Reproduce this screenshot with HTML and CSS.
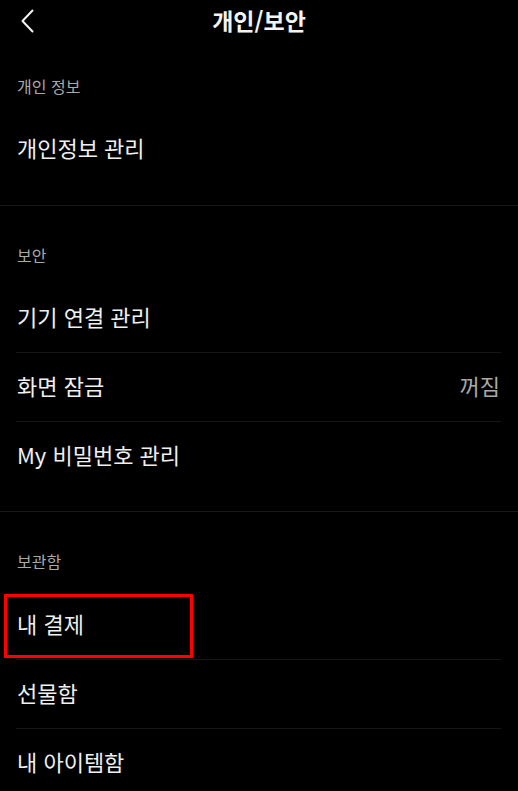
FILE: index.html
```html
<!DOCTYPE html>
<html lang="ko">
<head>
<meta charset="utf-8">
<title>개인/보안</title>
<link rel="stylesheet" href="styles.css">
</head>
<body>
<header class="topbar">
  <div class="back">
    <svg width="16" height="24" viewBox="0 0 16 24"><path d="M12.5 1.5 L2.5 12 L12.5 22.5" fill="none" stroke="#f2f2f2" stroke-width="2" stroke-linecap="round" stroke-linejoin="round"/></svg>
  </div>
  <h1 class="title">개인/보안</h1>
  <div></div>
</header>

<section class="section first">
  <div class="label">개인 정보</div>
  <ul class="list">
    <li class="item">개인정보 관리</li>
  </ul>
</section>

<section class="section">
  <div class="label">보안</div>
  <ul class="list">
    <li class="item">기기 연결 관리</li>
    <li class="item"><span>화면 잠금</span><span class="value">꺼짐</span></li>
    <li class="item">My 비밀번호 관리</li>
  </ul>
</section>

<section class="section last">
  <div class="label">보관함</div>
  <ul class="list">
    <li class="item highlighted">내 결제<span class="mark"></span></li>
    <li class="item">선물함</li>
    <li class="item">내 아이템함</li>
  </ul>
</section>
</body>
</html>
```

FILE: styles.css
```css
html, body {
  margin: 0;
  padding: 0;
  background: #000;
}
body {
  font-family: "Noto Sans CJK KR", "Noto Sans", sans-serif;
  color: #f0f0f0;
  width: 518px;
  overflow: hidden;
}
.topbar {
  height: 42px;
  display: grid;
  grid-template-columns: 60px 1fr 60px;
  align-items: center;
}
.back {
  padding-left: 20px;
  display: flex;
  align-items: center;
  height: 42px;
}
.back svg { display: block; }
.title {
  margin: 0;
  text-align: center;
  font-size: 23px;
  font-weight: 700;
  line-height: 40px;
  padding-bottom: 2px;
  color: #f4f4f4;
}
.section {
  padding-top: 39px;
  padding-bottom: 21px;
  border-bottom: 1px solid #191919;
}
.section.first {
  padding-top: 34px;
  padding-bottom: 22px;
}
.section.last {
  padding-top: 39px;
  border-bottom: none;
}
.label {
  padding-left: 17px;
  font-size: 16px;
  line-height: 20px;
  color: #a9a9a9;
  margin-bottom: 19px;
}
.section.last .label { margin-bottom: 20px; }
.list {
  list-style: none;
  margin: 0;
  padding: 0;
}
.item {
  box-sizing: border-box;
  margin: 0 17px 0 16px;
  padding: 0 1px 5px 1px;
  height: 68px;
  display: flex;
  align-items: center;
  justify-content: space-between;
  font-size: 22px;
  border-bottom: 1px solid #161616;
  position: relative;
}
.item:last-child { border-bottom: none; height: 68px; }
.item + .item:not(:last-child), .item:not(:last-child) { height: 69px; }
.value {
  color: #a9a9a9;
}
.mark {
  position: absolute;
  left: -12px;
  top: 3px;
  width: 183px;
  height: 58px;
  border: 3px solid #ff0000;
}
```
